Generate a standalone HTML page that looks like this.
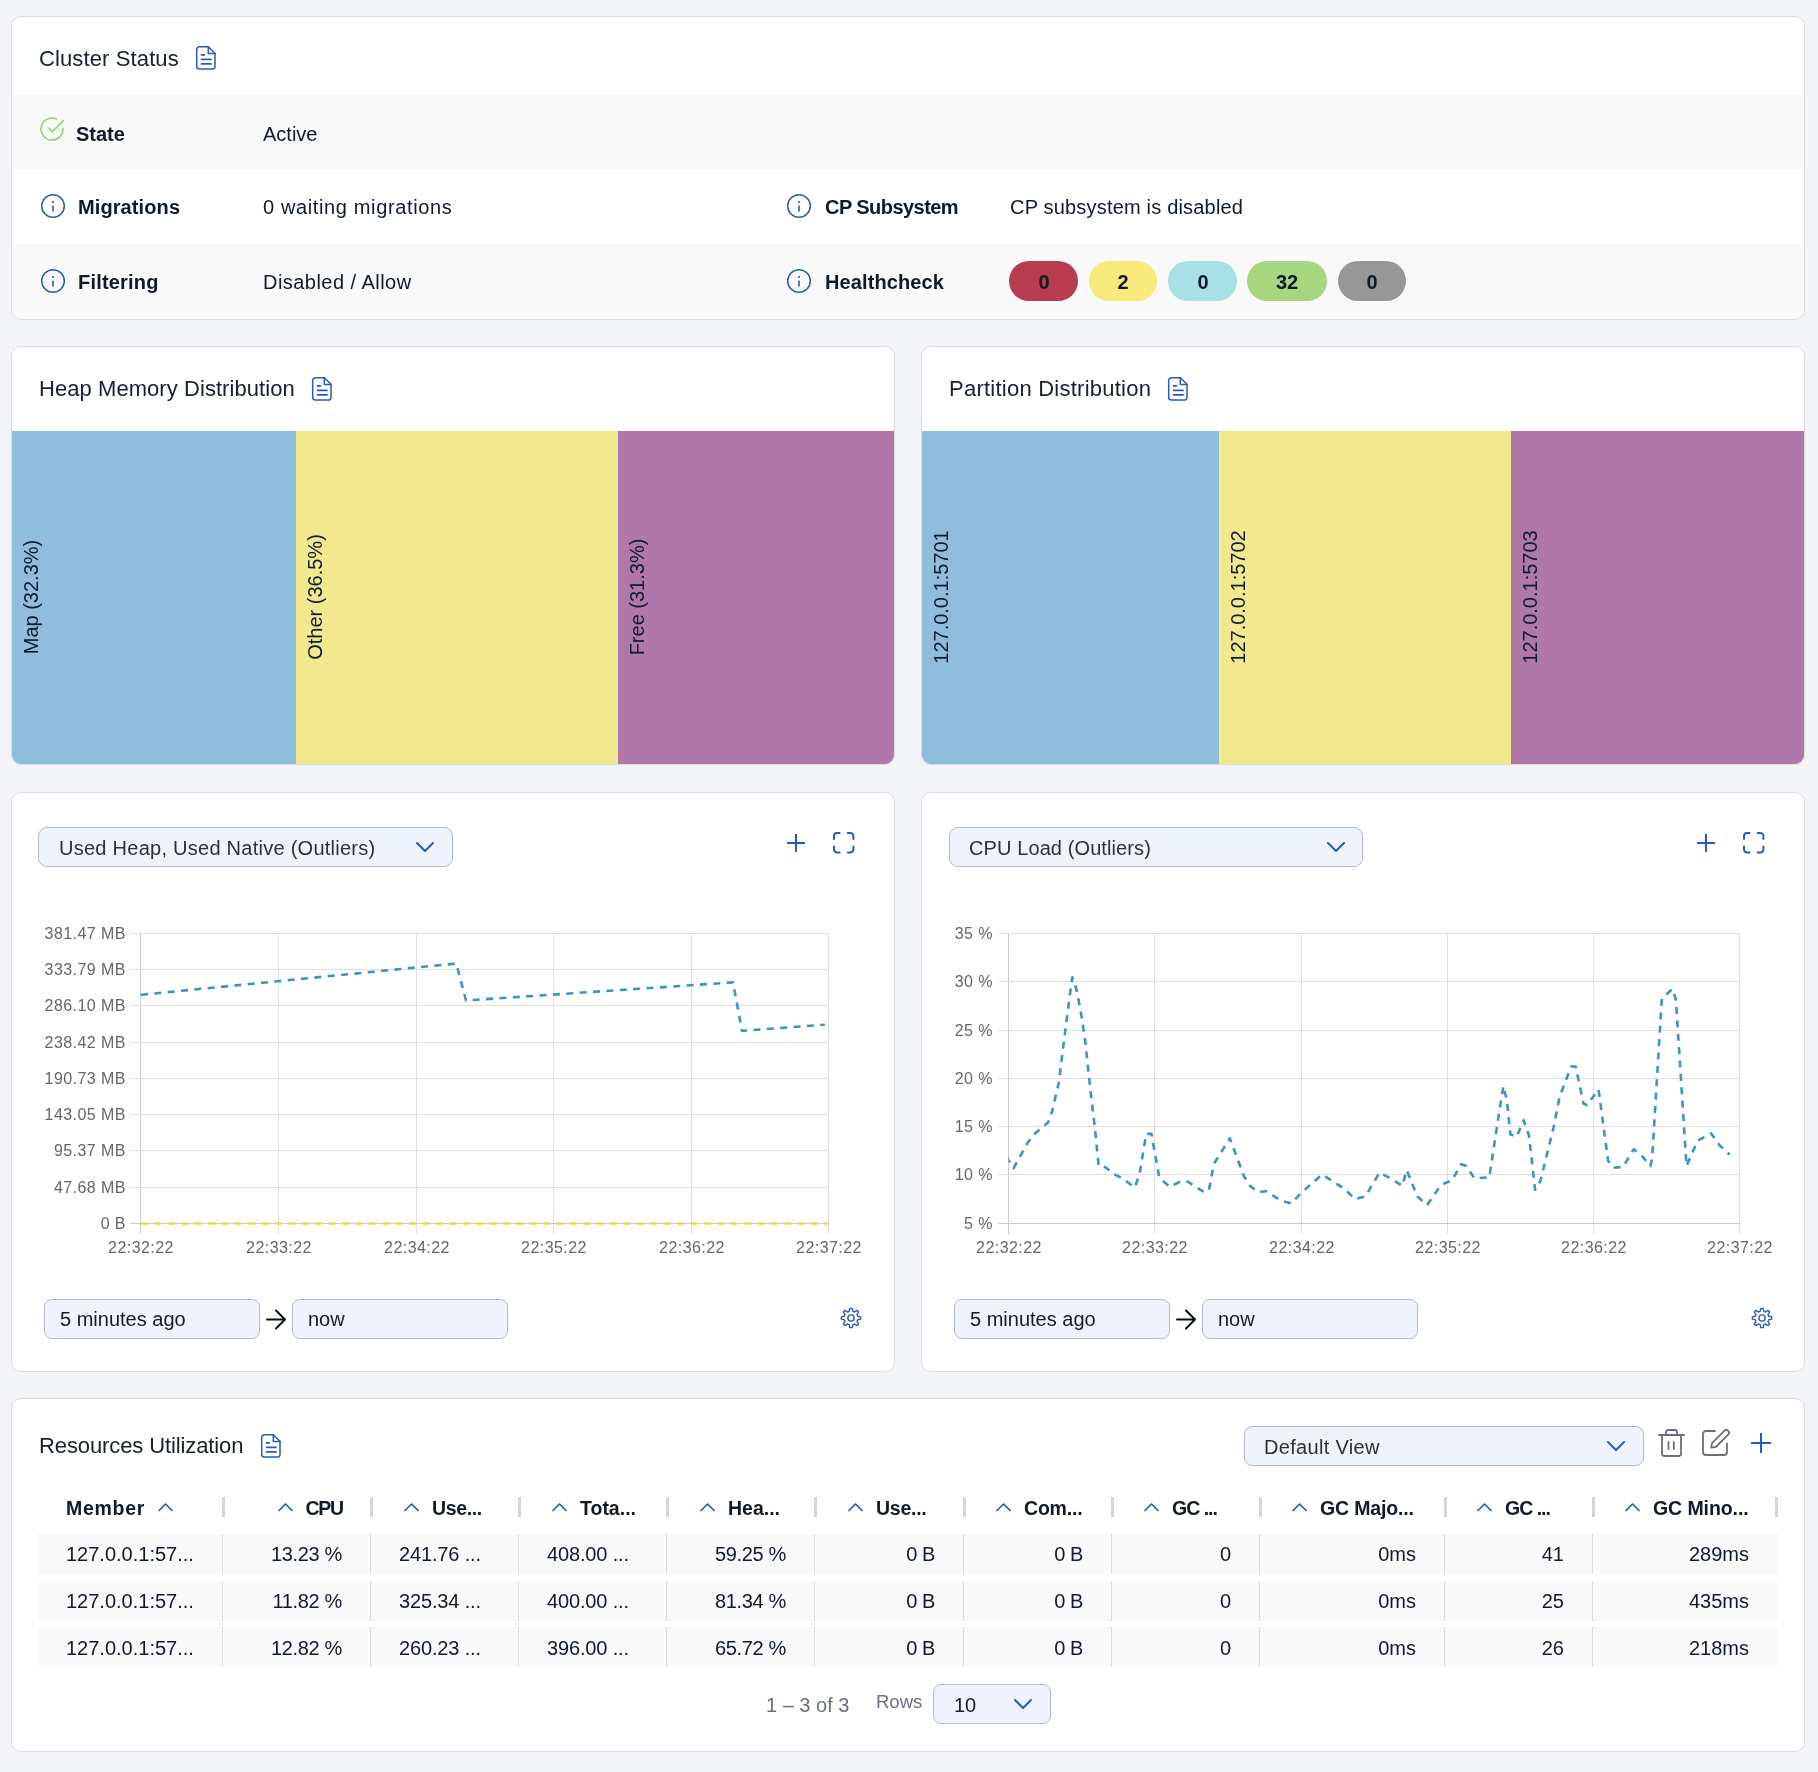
<!DOCTYPE html>
<html><head><meta charset="utf-8"><title>Cluster Dashboard</title>
<style>
html,body{margin:0;padding:0;}
body{width:1818px;height:1772px;background:#f3f4f8;position:relative;overflow:hidden;font-family:"Liberation Sans", sans-serif;}
.t{position:absolute;white-space:nowrap;will-change:transform;}
.b{position:absolute;box-sizing:border-box;}
.s{position:absolute;overflow:visible;}
</style></head><body>
<div class="b" style="left:11px;top:16px;width:1794px;height:304px;background:#fff;border:1px solid #dcdcdc;border-radius:10px;"></div>
<div class="b" style="left:12px;top:95px;width:1792px;height:74px;background:#f9f9fa;"></div>
<div class="b" style="left:12px;top:244px;width:1792px;height:75px;background:#f9f9fa;border-radius:0 0 9px 9px;"></div>
<div class="t" style="top:47.87px;font-size:22px;line-height:22px;color:#152031;letter-spacing:0.12px;left:38.60px;">Cluster Status</div>
<svg class="s" style="left:196.3px;top:46px" width="20" height="24" viewBox="0 0 20 24" fill="none"><g stroke="#2c59bf" stroke-width="1.5" stroke-linejoin="round" stroke-linecap="round"><path d="M12.3 0.8 L19.0 7.3 V20.6 A2.5 2.5 0 0 1 16.5 23.1 H3.5 A2.8 2.8 0 0 1 0.7 20.3 V3.6 A2.8 2.8 0 0 1 3.5 0.8 Z"/><path d="M12.3 0.8 V7.5 H19.0"/><path d="M5.5 8.9 H8.3 M5.5 13.4 H15 M5.5 17.9 H15" stroke-width="1.7"/></g></svg>
<svg class="s" style="left:38.8px;top:116.19999999999999px" width="26" height="26" viewBox="0 0 26 26" fill="none"><g stroke="#8dd46b" stroke-width="1.5" stroke-linecap="round" stroke-linejoin="round"><path d="M17.47 2.95 A11.0 11.0 0 1 0 23.97 12.23"/><path d="M9.9 12.1 L13.4 15.7 L24.3 4.6"/></g></svg>
<div class="t" style="top:123.57px;font-size:20px;line-height:20px;color:#0f1a2a;font-weight:700;left:76.00px;">State</div>
<div class="t" style="top:123.57px;font-size:20px;line-height:20px;color:#0f1a2a;left:262.50px;">Active</div>
<svg class="s" style="left:39.9px;top:193.3px" width="26" height="26" viewBox="0 0 26 26" fill="none"><g stroke="#2c59bf" stroke-linecap="round"><circle cx="13" cy="13" r="11.3" stroke-width="1.5"/><path d="M13 13.2 V18" stroke-width="1.6"/></g><circle cx="13" cy="9" r="1.1" fill="#2c59bf"/></svg>
<div class="t" style="top:197.47px;font-size:20px;line-height:20px;color:#0f1a2a;font-weight:700;letter-spacing:0.1px;left:78.00px;">Migrations</div>
<div class="t" style="top:197.47px;font-size:20px;line-height:20px;color:#0f1a2a;letter-spacing:0.63px;left:262.50px;">0 waiting migrations</div>
<svg class="s" style="left:39.9px;top:268.2px" width="26" height="26" viewBox="0 0 26 26" fill="none"><g stroke="#2c59bf" stroke-linecap="round"><circle cx="13" cy="13" r="11.3" stroke-width="1.5"/><path d="M13 13.2 V18" stroke-width="1.6"/></g><circle cx="13" cy="9" r="1.1" fill="#2c59bf"/></svg>
<div class="t" style="top:272.27px;font-size:20px;line-height:20px;color:#0f1a2a;font-weight:700;letter-spacing:0.2px;left:78.00px;">Filtering</div>
<div class="t" style="top:272.27px;font-size:20px;line-height:20px;color:#0f1a2a;letter-spacing:0.46px;left:262.50px;">Disabled / Allow</div>
<svg class="s" style="left:786.4px;top:193.3px" width="26" height="26" viewBox="0 0 26 26" fill="none"><g stroke="#2c59bf" stroke-linecap="round"><circle cx="13" cy="13" r="11.3" stroke-width="1.5"/><path d="M13 13.2 V18" stroke-width="1.6"/></g><circle cx="13" cy="9" r="1.1" fill="#2c59bf"/></svg>
<div class="t" style="top:197.27px;font-size:20px;line-height:20px;color:#0f1a2a;font-weight:700;letter-spacing:-0.55px;left:825.00px;">CP Subsystem</div>
<div class="t" style="top:197.27px;font-size:20px;line-height:20px;color:#0f1a2a;letter-spacing:0.19px;left:1009.70px;">CP subsystem is disabled</div>
<svg class="s" style="left:786.4px;top:268.2px" width="26" height="26" viewBox="0 0 26 26" fill="none"><g stroke="#2c59bf" stroke-linecap="round"><circle cx="13" cy="13" r="11.3" stroke-width="1.5"/><path d="M13 13.2 V18" stroke-width="1.6"/></g><circle cx="13" cy="9" r="1.1" fill="#2c59bf"/></svg>
<div class="t" style="top:272.27px;font-size:20px;line-height:20px;color:#0f1a2a;font-weight:700;letter-spacing:0.1px;left:824.50px;">Healthcheck</div>
<div class="b" style="left:1009px;top:261px;width:69px;height:40px;background:#b83b50;border-radius:20px;"></div>
<div class="t" style="top:272.27px;font-size:20px;line-height:20px;color:#0f1a2a;font-weight:700;left:743.50px;width:600px;text-align:center;">0</div>
<div class="b" style="left:1089px;top:261px;width:68px;height:40px;background:#f9ea7c;border-radius:20px;"></div>
<div class="t" style="top:272.27px;font-size:20px;line-height:20px;color:#0f1a2a;font-weight:700;left:823.00px;width:600px;text-align:center;">2</div>
<div class="b" style="left:1168px;top:261px;width:69px;height:40px;background:#a7e1e5;border-radius:20px;"></div>
<div class="t" style="top:272.27px;font-size:20px;line-height:20px;color:#0f1a2a;font-weight:700;left:902.50px;width:600px;text-align:center;">0</div>
<div class="b" style="left:1247px;top:261px;width:80px;height:40px;background:#a6d67e;border-radius:20px;"></div>
<div class="t" style="top:272.27px;font-size:20px;line-height:20px;color:#0f1a2a;font-weight:700;left:987.00px;width:600px;text-align:center;">32</div>
<div class="b" style="left:1338px;top:261px;width:68px;height:40px;background:#979797;border-radius:20px;"></div>
<div class="t" style="top:272.27px;font-size:20px;line-height:20px;color:#0f1a2a;font-weight:700;left:1072.00px;width:600px;text-align:center;">0</div>
<div class="b" style="left:11px;top:346px;width:884px;height:419px;background:#fff;border:1px solid #dcdcdc;border-radius:10px;"></div>
<div class="t" style="top:377.87px;font-size:22px;line-height:22px;color:#152031;letter-spacing:0.06px;left:38.60px;">Heap Memory Distribution</div>
<svg class="s" style="left:312.3px;top:377.4px" width="20" height="24" viewBox="0 0 20 24" fill="none"><g stroke="#2c59bf" stroke-width="1.5" stroke-linejoin="round" stroke-linecap="round"><path d="M12.3 0.8 L19.0 7.3 V20.6 A2.5 2.5 0 0 1 16.5 23.1 H3.5 A2.8 2.8 0 0 1 0.7 20.3 V3.6 A2.8 2.8 0 0 1 3.5 0.8 Z"/><path d="M12.3 0.8 V7.5 H19.0"/><path d="M5.5 8.9 H8.3 M5.5 13.4 H15 M5.5 17.9 H15" stroke-width="1.7"/></g></svg>
<div class="b" style="left:12px;top:431px;width:284px;height:333px;background:#8fbedd;border-bottom-left-radius:9px;"></div>
<div class="t" style="left:-261.7px;top:587.0px;width:600px;height:20px;text-align:center;font-size:20px;line-height:20px;color:#0f1a2a;transform:rotate(-90deg);transform-origin:300px 10px;"><span style="position:relative;top:-6.93px">Map (32.3%)</span></div>
<div class="b" style="left:296px;top:431px;width:322px;height:333px;background:#f2e98f;"></div>
<div class="t" style="left:22.3px;top:587.0px;width:600px;height:20px;text-align:center;font-size:20px;line-height:20px;color:#0f1a2a;transform:rotate(-90deg);transform-origin:300px 10px;"><span style="position:relative;top:-6.93px">Other (36.5%)</span></div>
<div class="b" style="left:618px;top:431px;width:276px;height:333px;background:#b078aa;border-bottom-right-radius:9px;"></div>
<div class="t" style="left:344.3px;top:587.0px;width:600px;height:20px;text-align:center;font-size:20px;line-height:20px;color:#0f1a2a;transform:rotate(-90deg);transform-origin:300px 10px;"><span style="position:relative;top:-6.93px">Free (31.3%)</span></div>
<div class="b" style="left:921px;top:346px;width:884px;height:419px;background:#fff;border:1px solid #dcdcdc;border-radius:10px;"></div>
<div class="t" style="top:377.87px;font-size:22px;line-height:22px;color:#152031;letter-spacing:0.24px;left:948.60px;">Partition Distribution</div>
<svg class="s" style="left:1168.3px;top:377.4px" width="20" height="24" viewBox="0 0 20 24" fill="none"><g stroke="#2c59bf" stroke-width="1.5" stroke-linejoin="round" stroke-linecap="round"><path d="M12.3 0.8 L19.0 7.3 V20.6 A2.5 2.5 0 0 1 16.5 23.1 H3.5 A2.8 2.8 0 0 1 0.7 20.3 V3.6 A2.8 2.8 0 0 1 3.5 0.8 Z"/><path d="M12.3 0.8 V7.5 H19.0"/><path d="M5.5 8.9 H8.3 M5.5 13.4 H15 M5.5 17.9 H15" stroke-width="1.7"/></g></svg>
<div class="b" style="left:922px;top:431px;width:297px;height:333px;background:#8fbedd;border-bottom-left-radius:9px;"></div>
<div class="t" style="left:648.3px;top:587.0px;width:600px;height:20px;text-align:center;font-size:20px;line-height:20px;color:#0f1a2a;transform:rotate(-90deg);transform-origin:300px 10px;"><span style="position:relative;top:-6.93px">127.0.0.1:5701</span></div>
<div class="b" style="left:1219px;top:431px;width:292px;height:333px;background:#f2e98f;"></div>
<div class="t" style="left:945.3px;top:587.0px;width:600px;height:20px;text-align:center;font-size:20px;line-height:20px;color:#0f1a2a;transform:rotate(-90deg);transform-origin:300px 10px;"><span style="position:relative;top:-6.93px">127.0.0.1:5702</span></div>
<div class="b" style="left:1511px;top:431px;width:293px;height:333px;background:#b078aa;border-bottom-right-radius:9px;"></div>
<div class="t" style="left:1237.3px;top:587.0px;width:600px;height:20px;text-align:center;font-size:20px;line-height:20px;color:#0f1a2a;transform:rotate(-90deg);transform-origin:300px 10px;"><span style="position:relative;top:-6.93px">127.0.0.1:5703</span></div>
<div class="b" style="left:11px;top:792px;width:884px;height:580px;background:#fff;border:1px solid #dcdcdc;border-radius:10px;"></div>
<div class="b" style="left:38px;top:827px;width:415px;height:40px;background:#eff4fc;border:1px solid #b3bac8;border-radius:9px;"></div>
<div class="t" style="top:837.57px;font-size:20px;line-height:20px;color:#2d3036;letter-spacing:0.26px;left:58.50px;">Used Heap, Used Native (Outliers)</div>
<svg class="s" style="left:415.5px;top:842px" width="18" height="10" viewBox="0 0 18 10" fill="none"><path d="M1 1 L9.0 9 L17 1" stroke="#2c59bf" stroke-width="2" stroke-linecap="round" stroke-linejoin="round"/></svg>
<svg class="s" style="left:787.4px;top:834.3px" width="18" height="18" viewBox="0 0 18 18" fill="none"><path d="M9.0 0 V18 M0 9.0 H18" stroke="#2c59bf" stroke-width="2"/></svg>
<svg class="s" style="left:832.6px;top:832.4px" width="22" height="22" viewBox="0 0 22 22" fill="none"><g stroke="#2c59bf" stroke-width="2" stroke-linecap="round" fill="none"><path d="M1 7 V4 A3 3 0 0 1 4 1 H6.6"/><path d="M14.8 1 H17.4 A3 3 0 0 1 20.4 4 V7"/><path d="M20.4 14.4 V17.4 A3 3 0 0 1 17.4 20.4 H14.8"/><path d="M6.6 20.4 H4 A3 3 0 0 1 1 17.4 V14.4"/></g></svg>
<svg class="s" style="left:11px;top:792px" width="884" height="580" fill="none"><defs><clipPath id="clip11"><rect x="129.5" y="136.60000000000002" width="688" height="298.9999999999999"/></clipPath></defs><path d="M129.50 141.60000000000002 V442" stroke="#cccccc" stroke-width="1"/><path d="M267.50 141.60000000000002 V442" stroke="#e0e0e0" stroke-width="1"/><path d="M405.50 141.60000000000002 V442" stroke="#e0e0e0" stroke-width="1"/><path d="M542.50 141.60000000000002 V442" stroke="#e0e0e0" stroke-width="1"/><path d="M680.50 141.60000000000002 V442" stroke="#e0e0e0" stroke-width="1"/><path d="M817.50 141.60000000000002 V442" stroke="#e0e0e0" stroke-width="1"/><path d="M119 141.50 H818" stroke="#e0e0e0" stroke-width="1"/><path d="M119 177.50 H818" stroke="#e0e0e0" stroke-width="1"/><path d="M119 213.50 H818" stroke="#e0e0e0" stroke-width="1"/><path d="M119 250.50 H818" stroke="#e0e0e0" stroke-width="1"/><path d="M119 286.50 H818" stroke="#e0e0e0" stroke-width="1"/><path d="M119 322.50 H818" stroke="#e0e0e0" stroke-width="1"/><path d="M119 358.50 H818" stroke="#e0e0e0" stroke-width="1"/><path d="M119 395.50 H818" stroke="#e0e0e0" stroke-width="1"/><path d="M119 431.50 H818" stroke="#cccccc" stroke-width="1"/><g clip-path="url(#clip11)"><path d="M130.00 431.50 L817.70 431.50" stroke="#ecdb3e" stroke-width="2.6" stroke-dasharray="7 6.4" stroke-linejoin="round"/><path d="M130.00 202.80 L445.30 171.50 L455.00 208.50 L722.00 190.40 L731.00 238.80 L813.80 232.70" stroke="#3a94c7" stroke-width="2.6" stroke-dasharray="7 6.4" stroke-linejoin="round"/></g></svg>
<div class="t" style="top:926.05px;font-size:16px;line-height:16px;color:#666666;letter-spacing:0.45px;left:-474.05px;width:600px;text-align:right;">381.47 MB</div>
<div class="t" style="top:962.05px;font-size:16px;line-height:16px;color:#666666;letter-spacing:0.45px;left:-474.05px;width:600px;text-align:right;">333.79 MB</div>
<div class="t" style="top:998.05px;font-size:16px;line-height:16px;color:#666666;letter-spacing:0.45px;left:-474.05px;width:600px;text-align:right;">286.10 MB</div>
<div class="t" style="top:1035.05px;font-size:16px;line-height:16px;color:#666666;letter-spacing:0.45px;left:-474.05px;width:600px;text-align:right;">238.42 MB</div>
<div class="t" style="top:1071.05px;font-size:16px;line-height:16px;color:#666666;letter-spacing:0.45px;left:-474.05px;width:600px;text-align:right;">190.73 MB</div>
<div class="t" style="top:1107.05px;font-size:16px;line-height:16px;color:#666666;letter-spacing:0.45px;left:-474.05px;width:600px;text-align:right;">143.05 MB</div>
<div class="t" style="top:1143.05px;font-size:16px;line-height:16px;color:#666666;letter-spacing:0.45px;left:-474.05px;width:600px;text-align:right;">95.37 MB</div>
<div class="t" style="top:1180.05px;font-size:16px;line-height:16px;color:#666666;letter-spacing:0.45px;left:-474.05px;width:600px;text-align:right;">47.68 MB</div>
<div class="t" style="top:1216.05px;font-size:16px;line-height:16px;color:#666666;letter-spacing:0.45px;left:-474.05px;width:600px;text-align:right;">0 B</div>
<div class="t" style="top:1240.35px;font-size:16px;line-height:16px;color:#666666;letter-spacing:0.45px;left:-159.28px;width:600px;text-align:center;">22:32:22</div>
<div class="t" style="top:1240.35px;font-size:16px;line-height:16px;color:#666666;letter-spacing:0.45px;left:-21.28px;width:600px;text-align:center;">22:33:22</div>
<div class="t" style="top:1240.35px;font-size:16px;line-height:16px;color:#666666;letter-spacing:0.45px;left:116.72px;width:600px;text-align:center;">22:34:22</div>
<div class="t" style="top:1240.35px;font-size:16px;line-height:16px;color:#666666;letter-spacing:0.45px;left:253.72px;width:600px;text-align:center;">22:35:22</div>
<div class="t" style="top:1240.35px;font-size:16px;line-height:16px;color:#666666;letter-spacing:0.45px;left:391.72px;width:600px;text-align:center;">22:36:22</div>
<div class="t" style="top:1240.35px;font-size:16px;line-height:16px;color:#666666;letter-spacing:0.45px;left:528.72px;width:600px;text-align:center;">22:37:22</div>
<div class="b" style="left:44px;top:1299px;width:216px;height:40px;background:#eff4fc;border:1px solid #b3bac8;border-radius:8px;"></div>
<div class="t" style="top:1308.57px;font-size:20px;line-height:20px;color:#161b24;left:60.00px;">5 minutes ago</div>
<svg class="s" style="left:266px;top:1309px" width="20" height="21" viewBox="0 0 20 21" fill="none"><g stroke="#060c18" stroke-width="2" stroke-linecap="round" stroke-linejoin="round"><path d="M1 10.5 H19 M10 1.5 L19 10.5 L10 19.5"/></g></svg>
<div class="b" style="left:292px;top:1299px;width:216px;height:40px;background:#eff4fc;border:1px solid #b3bac8;border-radius:8px;"></div>
<div class="t" style="top:1308.57px;font-size:20px;line-height:20px;color:#161b24;left:308.00px;">now</div>
<svg class="s" style="left:838.5px;top:1306.4px" width="24" height="24" viewBox="0 0 24 24" fill="none"><g stroke="#2c59bf" stroke-width="1.4" stroke-linejoin="round"><path d="M10.31 5.21 L10.82 2.37 L13.18 2.37 L13.69 5.21 L15.61 6.00 L17.97 4.36 L19.64 6.03 L18.00 8.39 L18.79 10.31 L21.63 10.82 L21.63 13.18 L18.79 13.69 L18.00 15.61 L19.64 17.97 L17.97 19.64 L15.61 18.00 L13.69 18.79 L13.18 21.63 L10.82 21.63 L10.31 18.79 L8.39 18.00 L6.03 19.64 L4.36 17.97 L6.00 15.61 L5.21 13.69 L2.37 13.18 L2.37 10.82 L5.21 10.31 L6.00 8.39 L4.36 6.03 L6.03 4.36 L8.39 6.00 Z"/><circle cx="12" cy="12" r="3.1"/></g></svg>
<div class="b" style="left:921px;top:792px;width:884px;height:580px;background:#fff;border:1px solid #dcdcdc;border-radius:10px;"></div>
<div class="b" style="left:949px;top:827px;width:414px;height:40px;background:#eff4fc;border:1px solid #b3bac8;border-radius:9px;"></div>
<div class="t" style="top:837.57px;font-size:20px;line-height:20px;color:#2d3036;letter-spacing:0.1px;left:968.50px;">CPU Load (Outliers)</div>
<svg class="s" style="left:1326.7px;top:842px" width="18" height="10" viewBox="0 0 18 10" fill="none"><path d="M1 1 L9.0 9 L17 1" stroke="#2c59bf" stroke-width="2" stroke-linecap="round" stroke-linejoin="round"/></svg>
<svg class="s" style="left:1697.4px;top:834.3px" width="18" height="18" viewBox="0 0 18 18" fill="none"><path d="M9.0 0 V18 M0 9.0 H18" stroke="#2c59bf" stroke-width="2"/></svg>
<svg class="s" style="left:1742.6px;top:832.4px" width="22" height="22" viewBox="0 0 22 22" fill="none"><g stroke="#2c59bf" stroke-width="2" stroke-linecap="round" fill="none"><path d="M1 7 V4 A3 3 0 0 1 4 1 H6.6"/><path d="M14.8 1 H17.4 A3 3 0 0 1 20.4 4 V7"/><path d="M20.4 14.4 V17.4 A3 3 0 0 1 17.4 20.4 H14.8"/><path d="M6.6 20.4 H4 A3 3 0 0 1 1 17.4 V14.4"/></g></svg>
<svg class="s" style="left:921px;top:792px" width="884" height="580" fill="none"><defs><clipPath id="clip921"><rect x="87.5" y="136.5" width="731" height="300.0"/></clipPath></defs><path d="M87.50 141.5 V442" stroke="#cccccc" stroke-width="1"/><path d="M233.50 141.5 V442" stroke="#e0e0e0" stroke-width="1"/><path d="M380.50 141.5 V442" stroke="#e0e0e0" stroke-width="1"/><path d="M526.50 141.5 V442" stroke="#e0e0e0" stroke-width="1"/><path d="M672.50 141.5 V442" stroke="#e0e0e0" stroke-width="1"/><path d="M818.50 141.5 V442" stroke="#e0e0e0" stroke-width="1"/><path d="M77 141.50 H819" stroke="#e0e0e0" stroke-width="1"/><path d="M77 189.50 H819" stroke="#e0e0e0" stroke-width="1"/><path d="M77 238.50 H819" stroke="#e0e0e0" stroke-width="1"/><path d="M77 286.50 H819" stroke="#e0e0e0" stroke-width="1"/><path d="M77 334.50 H819" stroke="#e0e0e0" stroke-width="1"/><path d="M77 382.50 H819" stroke="#e0e0e0" stroke-width="1"/><path d="M77 431.50 H819" stroke="#cccccc" stroke-width="1"/><g clip-path="url(#clip921)"><path d="M85.20 364.50 L92.60 376.20 L106.60 350.80 L114.40 341.10 L127.10 330.40 L131.00 319.70 L137.80 290.50 L143.60 243.70 L149.10 200.90 L151.40 185.30 L155.30 197.00 L159.20 216.50 L164.10 247.60 L169.00 294.40 L173.80 335.30 L177.70 374.20 L184.50 375.20 L192.30 382.00 L201.10 385.90 L213.70 395.60 L218.60 382.00 L225.20 341.90 L230.40 341.90 L238.40 386.00 L248.90 394.80 L259.50 389.50 L266.50 389.50 L281.50 399.20 L287.70 399.20 L292.90 371.90 L308.80 346.30 L322.90 384.20 L329.00 393.90 L337.00 400.00 L345.80 399.20 L359.80 408.80 L370.40 411.50 L377.50 403.60 L388.00 393.90 L401.20 382.40 L409.10 387.70 L423.20 396.50 L433.80 407.10 L444.40 404.40 L458.40 380.70 L467.20 385.10 L481.30 393.90 L485.70 378.00 L496.30 404.40 L506.00 413.20 L520.00 393.00 L531.30 388.00 L540.10 372.20 L545.40 374.00 L553.30 386.30 L568.30 385.40 L578.00 321.20 L582.40 293.90 L585.90 308.80 L589.40 342.30 L595.60 344.90 L602.60 328.20 L607.90 343.20 L614.10 397.80 L619.40 389.00 L632.60 335.30 L638.70 304.40 L650.20 274.50 L654.60 274.50 L662.50 311.50 L666.00 313.20 L677.50 297.40 L687.10 368.70 L692.40 375.70 L702.10 374.90 L712.70 357.30 L719.70 362.50 L729.40 374.00 L731.10 366.90 L740.80 206.70 L751.40 197.00 L754.90 207.60 L765.50 374.00 L772.50 358.10 L776.90 348.50 L790.10 341.40 L798.90 353.70 L808.60 362.50" stroke="#3a94c7" stroke-width="2.6" stroke-dasharray="7 6.4" stroke-linejoin="round"/></g></svg>
<div class="t" style="top:926.05px;font-size:16px;line-height:16px;color:#666666;letter-spacing:0.45px;left:392.95px;width:600px;text-align:right;">35 %</div>
<div class="t" style="top:974.05px;font-size:16px;line-height:16px;color:#666666;letter-spacing:0.45px;left:392.95px;width:600px;text-align:right;">30 %</div>
<div class="t" style="top:1023.05px;font-size:16px;line-height:16px;color:#666666;letter-spacing:0.45px;left:392.95px;width:600px;text-align:right;">25 %</div>
<div class="t" style="top:1071.05px;font-size:16px;line-height:16px;color:#666666;letter-spacing:0.45px;left:392.95px;width:600px;text-align:right;">20 %</div>
<div class="t" style="top:1119.05px;font-size:16px;line-height:16px;color:#666666;letter-spacing:0.45px;left:392.95px;width:600px;text-align:right;">15 %</div>
<div class="t" style="top:1167.05px;font-size:16px;line-height:16px;color:#666666;letter-spacing:0.45px;left:392.95px;width:600px;text-align:right;">10 %</div>
<div class="t" style="top:1216.05px;font-size:16px;line-height:16px;color:#666666;letter-spacing:0.45px;left:392.95px;width:600px;text-align:right;">5 %</div>
<div class="t" style="top:1240.35px;font-size:16px;line-height:16px;color:#666666;letter-spacing:0.45px;left:708.72px;width:600px;text-align:center;">22:32:22</div>
<div class="t" style="top:1240.35px;font-size:16px;line-height:16px;color:#666666;letter-spacing:0.45px;left:854.72px;width:600px;text-align:center;">22:33:22</div>
<div class="t" style="top:1240.35px;font-size:16px;line-height:16px;color:#666666;letter-spacing:0.45px;left:1001.72px;width:600px;text-align:center;">22:34:22</div>
<div class="t" style="top:1240.35px;font-size:16px;line-height:16px;color:#666666;letter-spacing:0.45px;left:1147.72px;width:600px;text-align:center;">22:35:22</div>
<div class="t" style="top:1240.35px;font-size:16px;line-height:16px;color:#666666;letter-spacing:0.45px;left:1293.72px;width:600px;text-align:center;">22:36:22</div>
<div class="t" style="top:1240.35px;font-size:16px;line-height:16px;color:#666666;letter-spacing:0.45px;left:1439.72px;width:600px;text-align:center;">22:37:22</div>
<div class="b" style="left:954px;top:1299px;width:216px;height:40px;background:#eff4fc;border:1px solid #b3bac8;border-radius:8px;"></div>
<div class="t" style="top:1308.57px;font-size:20px;line-height:20px;color:#161b24;left:970.00px;">5 minutes ago</div>
<svg class="s" style="left:1176px;top:1309px" width="20" height="21" viewBox="0 0 20 21" fill="none"><g stroke="#060c18" stroke-width="2" stroke-linecap="round" stroke-linejoin="round"><path d="M1 10.5 H19 M10 1.5 L19 10.5 L10 19.5"/></g></svg>
<div class="b" style="left:1202px;top:1299px;width:216px;height:40px;background:#eff4fc;border:1px solid #b3bac8;border-radius:8px;"></div>
<div class="t" style="top:1308.57px;font-size:20px;line-height:20px;color:#161b24;left:1218.00px;">now</div>
<svg class="s" style="left:1749.6px;top:1306.4px" width="24" height="24" viewBox="0 0 24 24" fill="none"><g stroke="#2c59bf" stroke-width="1.4" stroke-linejoin="round"><path d="M10.31 5.21 L10.82 2.37 L13.18 2.37 L13.69 5.21 L15.61 6.00 L17.97 4.36 L19.64 6.03 L18.00 8.39 L18.79 10.31 L21.63 10.82 L21.63 13.18 L18.79 13.69 L18.00 15.61 L19.64 17.97 L17.97 19.64 L15.61 18.00 L13.69 18.79 L13.18 21.63 L10.82 21.63 L10.31 18.79 L8.39 18.00 L6.03 19.64 L4.36 17.97 L6.00 15.61 L5.21 13.69 L2.37 13.18 L2.37 10.82 L5.21 10.31 L6.00 8.39 L4.36 6.03 L6.03 4.36 L8.39 6.00 Z"/><circle cx="12" cy="12" r="3.1"/></g></svg>
<div class="b" style="left:11px;top:1398px;width:1794px;height:354px;background:#fff;border:1px solid #dcdcdc;border-radius:10px;"></div>
<div class="t" style="top:1434.87px;font-size:22px;line-height:22px;color:#152031;letter-spacing:-0.11px;left:38.60px;">Resources Utilization</div>
<svg class="s" style="left:260.8px;top:1434.4px" width="20" height="24" viewBox="0 0 20 24" fill="none"><g stroke="#2c59bf" stroke-width="1.5" stroke-linejoin="round" stroke-linecap="round"><path d="M12.3 0.8 L19.0 7.3 V20.6 A2.5 2.5 0 0 1 16.5 23.1 H3.5 A2.8 2.8 0 0 1 0.7 20.3 V3.6 A2.8 2.8 0 0 1 3.5 0.8 Z"/><path d="M12.3 0.8 V7.5 H19.0"/><path d="M5.5 8.9 H8.3 M5.5 13.4 H15 M5.5 17.9 H15" stroke-width="1.7"/></g></svg>
<div class="b" style="left:1244px;top:1426px;width:400px;height:40px;background:#eff4fc;border:1px solid #b3bac8;border-radius:8px;"></div>
<div class="t" style="top:1436.57px;font-size:20px;line-height:20px;color:#2d3036;letter-spacing:0.32px;left:1263.50px;">Default View</div>
<svg class="s" style="left:1607.2px;top:1441.2px" width="18" height="10" viewBox="0 0 18 10" fill="none"><path d="M1 1 L9.0 9 L17 1" stroke="#2c59bf" stroke-width="2" stroke-linecap="round" stroke-linejoin="round"/></svg>
<svg class="s" style="left:1657.5px;top:1428px" width="27" height="30" viewBox="0 0 27 30" fill="none"><g stroke="#6b6e7c" stroke-width="1.8" stroke-linecap="round" stroke-linejoin="round"><path d="M1 7 H26"/><path d="M8 7 V4 A2 2 0 0 1 10 2 H17 A2 2 0 0 1 19 4 V7"/><path d="M4 7 V25.5 A2.5 2.5 0 0 0 6.5 28 H20.5 A2.5 2.5 0 0 0 23 25.5 V7"/><path d="M10.5 14 V21 M15.8 14 V21"/></g></svg>
<svg class="s" style="left:1700.5px;top:1427px" width="31" height="30" viewBox="0 0 31 30" fill="none"><g stroke="#6b6e7c" stroke-width="1.8" stroke-linecap="round" stroke-linejoin="round"><path d="M14 4 H5 A3 3 0 0 0 2 7 V25 A3 3 0 0 0 5 28 H23 A3 3 0 0 0 26 25 V16.5"/><path d="M10.2 20.6 L11 16.2 L23.8 3.4 A2 2 0 0 1 26.6 3.4 L27.6 4.4 A2 2 0 0 1 27.6 7.2 L14.8 20 Z"/></g></svg>
<svg class="s" style="left:1751.0px;top:1433.0px" width="20" height="20" viewBox="0 0 20 20" fill="none"><path d="M10.0 0 V20 M0 10.0 H20" stroke="#2c59bf" stroke-width="2"/></svg>
<div class="b" style="left:38px;top:1534px;width:1740px;height:40px;background:#f9f9f9;"></div>
<div class="b" style="left:222.0px;top:1534px;width:1px;height:40px;background:#dcdcdc;"></div>
<div class="b" style="left:370.0px;top:1534px;width:1px;height:40px;background:#dcdcdc;"></div>
<div class="b" style="left:518.0px;top:1534px;width:1px;height:40px;background:#dcdcdc;"></div>
<div class="b" style="left:666.0px;top:1534px;width:1px;height:40px;background:#dcdcdc;"></div>
<div class="b" style="left:814.0px;top:1534px;width:1px;height:40px;background:#dcdcdc;"></div>
<div class="b" style="left:962.5px;top:1534px;width:1px;height:40px;background:#dcdcdc;"></div>
<div class="b" style="left:1110.9px;top:1534px;width:1px;height:40px;background:#dcdcdc;"></div>
<div class="b" style="left:1258.9px;top:1534px;width:1px;height:40px;background:#dcdcdc;"></div>
<div class="b" style="left:1443.8px;top:1534px;width:1px;height:40px;background:#dcdcdc;"></div>
<div class="b" style="left:1592.0px;top:1534px;width:1px;height:40px;background:#dcdcdc;"></div>
<div class="b" style="left:38px;top:1581px;width:1740px;height:40px;background:#f9f9f9;"></div>
<div class="b" style="left:222.0px;top:1581px;width:1px;height:40px;background:#dcdcdc;"></div>
<div class="b" style="left:370.0px;top:1581px;width:1px;height:40px;background:#dcdcdc;"></div>
<div class="b" style="left:518.0px;top:1581px;width:1px;height:40px;background:#dcdcdc;"></div>
<div class="b" style="left:666.0px;top:1581px;width:1px;height:40px;background:#dcdcdc;"></div>
<div class="b" style="left:814.0px;top:1581px;width:1px;height:40px;background:#dcdcdc;"></div>
<div class="b" style="left:962.5px;top:1581px;width:1px;height:40px;background:#dcdcdc;"></div>
<div class="b" style="left:1110.9px;top:1581px;width:1px;height:40px;background:#dcdcdc;"></div>
<div class="b" style="left:1258.9px;top:1581px;width:1px;height:40px;background:#dcdcdc;"></div>
<div class="b" style="left:1443.8px;top:1581px;width:1px;height:40px;background:#dcdcdc;"></div>
<div class="b" style="left:1592.0px;top:1581px;width:1px;height:40px;background:#dcdcdc;"></div>
<div class="b" style="left:38px;top:1627px;width:1740px;height:40px;background:#f9f9f9;"></div>
<div class="b" style="left:222.0px;top:1627px;width:1px;height:40px;background:#dcdcdc;"></div>
<div class="b" style="left:370.0px;top:1627px;width:1px;height:40px;background:#dcdcdc;"></div>
<div class="b" style="left:518.0px;top:1627px;width:1px;height:40px;background:#dcdcdc;"></div>
<div class="b" style="left:666.0px;top:1627px;width:1px;height:40px;background:#dcdcdc;"></div>
<div class="b" style="left:814.0px;top:1627px;width:1px;height:40px;background:#dcdcdc;"></div>
<div class="b" style="left:962.5px;top:1627px;width:1px;height:40px;background:#dcdcdc;"></div>
<div class="b" style="left:1110.9px;top:1627px;width:1px;height:40px;background:#dcdcdc;"></div>
<div class="b" style="left:1258.9px;top:1627px;width:1px;height:40px;background:#dcdcdc;"></div>
<div class="b" style="left:1443.8px;top:1627px;width:1px;height:40px;background:#dcdcdc;"></div>
<div class="b" style="left:1592.0px;top:1627px;width:1px;height:40px;background:#dcdcdc;"></div>
<div class="b" style="left:222.0px;top:1497px;width:3px;height:20px;background:#d6d6d6;"></div>
<div class="b" style="left:370.0px;top:1497px;width:3px;height:20px;background:#d6d6d6;"></div>
<div class="b" style="left:518.0px;top:1497px;width:3px;height:20px;background:#d6d6d6;"></div>
<div class="b" style="left:666.0px;top:1497px;width:3px;height:20px;background:#d6d6d6;"></div>
<div class="b" style="left:814.0px;top:1497px;width:3px;height:20px;background:#d6d6d6;"></div>
<div class="b" style="left:962.5px;top:1497px;width:3px;height:20px;background:#d6d6d6;"></div>
<div class="b" style="left:1110.9px;top:1497px;width:3px;height:20px;background:#d6d6d6;"></div>
<div class="b" style="left:1258.9px;top:1497px;width:3px;height:20px;background:#d6d6d6;"></div>
<div class="b" style="left:1443.8px;top:1497px;width:3px;height:20px;background:#d6d6d6;"></div>
<div class="b" style="left:1592.0px;top:1497px;width:3px;height:20px;background:#d6d6d6;"></div>
<div class="b" style="left:1774.8px;top:1497px;width:3px;height:20px;background:#d6d6d6;"></div>
<div class="t" style="top:1498.69px;font-size:19.5px;line-height:19.5px;color:#0f1a2a;font-weight:700;letter-spacing:0.7px;left:66.00px;">Member</div>
<svg class="s" style="left:158px;top:1503px" width="15" height="9" viewBox="0 0 15 9" fill="none"><path d="M1 7.5 L7.5 1 L14 7.5" stroke="#2c59bf" stroke-width="1.7" stroke-linecap="round" stroke-linejoin="round"/></svg>
<div class="t" style="top:1498.69px;font-size:19.5px;line-height:19.5px;color:#0f1a2a;font-weight:700;letter-spacing:-1.2px;left:-256.80px;width:600px;text-align:right;">CPU</div>
<svg class="s" style="left:277.9px;top:1503px" width="15" height="9" viewBox="0 0 15 9" fill="none"><path d="M1 7.5 L7.5 1 L14 7.5" stroke="#2c59bf" stroke-width="1.7" stroke-linecap="round" stroke-linejoin="round"/></svg>
<div class="t" style="top:1498.69px;font-size:19.5px;line-height:19.5px;color:#0f1a2a;font-weight:700;letter-spacing:-0.35px;left:432.00px;">Use...</div>
<svg class="s" style="left:404px;top:1503px" width="15" height="9" viewBox="0 0 15 9" fill="none"><path d="M1 7.5 L7.5 1 L14 7.5" stroke="#2c59bf" stroke-width="1.7" stroke-linecap="round" stroke-linejoin="round"/></svg>
<div class="t" style="top:1498.69px;font-size:19.5px;line-height:19.5px;color:#0f1a2a;font-weight:700;left:579.80px;">Tota...</div>
<svg class="s" style="left:551.8px;top:1503px" width="15" height="9" viewBox="0 0 15 9" fill="none"><path d="M1 7.5 L7.5 1 L14 7.5" stroke="#2c59bf" stroke-width="1.7" stroke-linecap="round" stroke-linejoin="round"/></svg>
<div class="t" style="top:1498.69px;font-size:19.5px;line-height:19.5px;color:#0f1a2a;font-weight:700;left:728.30px;">Hea...</div>
<svg class="s" style="left:700.3px;top:1503px" width="15" height="9" viewBox="0 0 15 9" fill="none"><path d="M1 7.5 L7.5 1 L14 7.5" stroke="#2c59bf" stroke-width="1.7" stroke-linecap="round" stroke-linejoin="round"/></svg>
<div class="t" style="top:1498.69px;font-size:19.5px;line-height:19.5px;color:#0f1a2a;font-weight:700;letter-spacing:-0.25px;left:876.00px;">Use...</div>
<svg class="s" style="left:848px;top:1503px" width="15" height="9" viewBox="0 0 15 9" fill="none"><path d="M1 7.5 L7.5 1 L14 7.5" stroke="#2c59bf" stroke-width="1.7" stroke-linecap="round" stroke-linejoin="round"/></svg>
<div class="t" style="top:1498.69px;font-size:19.5px;line-height:19.5px;color:#0f1a2a;font-weight:700;letter-spacing:-0.2px;left:1023.70px;">Com...</div>
<svg class="s" style="left:995.7px;top:1503px" width="15" height="9" viewBox="0 0 15 9" fill="none"><path d="M1 7.5 L7.5 1 L14 7.5" stroke="#2c59bf" stroke-width="1.7" stroke-linecap="round" stroke-linejoin="round"/></svg>
<div class="t" style="top:1498.69px;font-size:19.5px;line-height:19.5px;color:#0f1a2a;font-weight:700;letter-spacing:-1.0px;left:1172.20px;">GC ...</div>
<svg class="s" style="left:1144.2px;top:1503px" width="15" height="9" viewBox="0 0 15 9" fill="none"><path d="M1 7.5 L7.5 1 L14 7.5" stroke="#2c59bf" stroke-width="1.7" stroke-linecap="round" stroke-linejoin="round"/></svg>
<div class="t" style="top:1498.69px;font-size:19.5px;line-height:19.5px;color:#0f1a2a;font-weight:700;letter-spacing:-0.17px;left:1319.90px;">GC Majo...</div>
<svg class="s" style="left:1291.9px;top:1503px" width="15" height="9" viewBox="0 0 15 9" fill="none"><path d="M1 7.5 L7.5 1 L14 7.5" stroke="#2c59bf" stroke-width="1.7" stroke-linecap="round" stroke-linejoin="round"/></svg>
<div class="t" style="top:1498.69px;font-size:19.5px;line-height:19.5px;color:#0f1a2a;font-weight:700;letter-spacing:-1.0px;left:1505.10px;">GC ...</div>
<svg class="s" style="left:1477.1px;top:1503px" width="15" height="9" viewBox="0 0 15 9" fill="none"><path d="M1 7.5 L7.5 1 L14 7.5" stroke="#2c59bf" stroke-width="1.7" stroke-linecap="round" stroke-linejoin="round"/></svg>
<div class="t" style="top:1498.69px;font-size:19.5px;line-height:19.5px;color:#0f1a2a;font-weight:700;letter-spacing:-0.08px;left:1653.40px;">GC Mino...</div>
<svg class="s" style="left:1625.4px;top:1503px" width="15" height="9" viewBox="0 0 15 9" fill="none"><path d="M1 7.5 L7.5 1 L14 7.5" stroke="#2c59bf" stroke-width="1.7" stroke-linecap="round" stroke-linejoin="round"/></svg>
<div class="t" style="top:1543.87px;font-size:20px;line-height:20px;color:#0f1a2a;left:65.50px;">127.0.0.1:57...</div>
<div class="t" style="top:1543.87px;font-size:20px;line-height:20px;color:#0f1a2a;letter-spacing:-0.35px;left:-257.65px;width:600px;text-align:right;">13.23 %</div>
<div class="t" style="top:1543.87px;font-size:20px;line-height:20px;color:#0f1a2a;letter-spacing:-0.15px;left:398.50px;">241.76 ...</div>
<div class="t" style="top:1543.87px;font-size:20px;line-height:20px;color:#0f1a2a;letter-spacing:-0.15px;left:546.50px;">408.00 ...</div>
<div class="t" style="top:1543.87px;font-size:20px;line-height:20px;color:#0f1a2a;letter-spacing:-0.35px;left:186.35px;width:600px;text-align:right;">59.25 %</div>
<div class="t" style="top:1543.87px;font-size:20px;line-height:20px;color:#0f1a2a;letter-spacing:-0.4px;left:334.90px;width:600px;text-align:right;">0 B</div>
<div class="t" style="top:1543.87px;font-size:20px;line-height:20px;color:#0f1a2a;letter-spacing:-0.4px;left:483.30px;width:600px;text-align:right;">0 B</div>
<div class="t" style="top:1543.87px;font-size:20px;line-height:20px;color:#0f1a2a;left:630.90px;width:600px;text-align:right;">0</div>
<div class="t" style="top:1543.87px;font-size:20px;line-height:20px;color:#0f1a2a;left:815.80px;width:600px;text-align:right;">0ms</div>
<div class="t" style="top:1543.87px;font-size:20px;line-height:20px;color:#0f1a2a;left:964.00px;width:600px;text-align:right;">41</div>
<div class="t" style="top:1543.87px;font-size:20px;line-height:20px;color:#0f1a2a;left:1149.30px;width:600px;text-align:right;">289ms</div>
<div class="t" style="top:1590.67px;font-size:20px;line-height:20px;color:#0f1a2a;left:65.50px;">127.0.0.1:57...</div>
<div class="t" style="top:1590.67px;font-size:20px;line-height:20px;color:#0f1a2a;letter-spacing:-0.35px;left:-257.65px;width:600px;text-align:right;">11.82 %</div>
<div class="t" style="top:1590.67px;font-size:20px;line-height:20px;color:#0f1a2a;letter-spacing:-0.15px;left:398.50px;">325.34 ...</div>
<div class="t" style="top:1590.67px;font-size:20px;line-height:20px;color:#0f1a2a;letter-spacing:-0.15px;left:546.50px;">400.00 ...</div>
<div class="t" style="top:1590.67px;font-size:20px;line-height:20px;color:#0f1a2a;letter-spacing:-0.35px;left:186.35px;width:600px;text-align:right;">81.34 %</div>
<div class="t" style="top:1590.67px;font-size:20px;line-height:20px;color:#0f1a2a;letter-spacing:-0.4px;left:334.90px;width:600px;text-align:right;">0 B</div>
<div class="t" style="top:1590.67px;font-size:20px;line-height:20px;color:#0f1a2a;letter-spacing:-0.4px;left:483.30px;width:600px;text-align:right;">0 B</div>
<div class="t" style="top:1590.67px;font-size:20px;line-height:20px;color:#0f1a2a;left:630.90px;width:600px;text-align:right;">0</div>
<div class="t" style="top:1590.67px;font-size:20px;line-height:20px;color:#0f1a2a;left:815.80px;width:600px;text-align:right;">0ms</div>
<div class="t" style="top:1590.67px;font-size:20px;line-height:20px;color:#0f1a2a;left:964.00px;width:600px;text-align:right;">25</div>
<div class="t" style="top:1590.67px;font-size:20px;line-height:20px;color:#0f1a2a;left:1149.30px;width:600px;text-align:right;">435ms</div>
<div class="t" style="top:1637.67px;font-size:20px;line-height:20px;color:#0f1a2a;left:65.50px;">127.0.0.1:57...</div>
<div class="t" style="top:1637.67px;font-size:20px;line-height:20px;color:#0f1a2a;letter-spacing:-0.35px;left:-257.65px;width:600px;text-align:right;">12.82 %</div>
<div class="t" style="top:1637.67px;font-size:20px;line-height:20px;color:#0f1a2a;letter-spacing:-0.15px;left:398.50px;">260.23 ...</div>
<div class="t" style="top:1637.67px;font-size:20px;line-height:20px;color:#0f1a2a;letter-spacing:-0.15px;left:546.50px;">396.00 ...</div>
<div class="t" style="top:1637.67px;font-size:20px;line-height:20px;color:#0f1a2a;letter-spacing:-0.35px;left:186.35px;width:600px;text-align:right;">65.72 %</div>
<div class="t" style="top:1637.67px;font-size:20px;line-height:20px;color:#0f1a2a;letter-spacing:-0.4px;left:334.90px;width:600px;text-align:right;">0 B</div>
<div class="t" style="top:1637.67px;font-size:20px;line-height:20px;color:#0f1a2a;letter-spacing:-0.4px;left:483.30px;width:600px;text-align:right;">0 B</div>
<div class="t" style="top:1637.67px;font-size:20px;line-height:20px;color:#0f1a2a;left:630.90px;width:600px;text-align:right;">0</div>
<div class="t" style="top:1637.67px;font-size:20px;line-height:20px;color:#0f1a2a;left:815.80px;width:600px;text-align:right;">0ms</div>
<div class="t" style="top:1637.67px;font-size:20px;line-height:20px;color:#0f1a2a;left:964.00px;width:600px;text-align:right;">26</div>
<div class="t" style="top:1637.67px;font-size:20px;line-height:20px;color:#0f1a2a;left:1149.30px;width:600px;text-align:right;">218ms</div>
<div class="t" style="top:1695.07px;font-size:20px;line-height:20px;color:#6b7080;left:766.00px;">1 – 3 of 3</div>
<div class="t" style="top:1693.34px;font-size:18.5px;line-height:18.5px;color:#6b7080;left:875.50px;">Rows</div>
<div class="b" style="left:933px;top:1684px;width:118px;height:40px;background:#eff4fc;border:1px solid #b3bac8;border-radius:8px;"></div>
<div class="t" style="top:1695.07px;font-size:20px;line-height:20px;color:#161b24;left:954.00px;">10</div>
<svg class="s" style="left:1013.8px;top:1699px" width="18" height="10" viewBox="0 0 18 10" fill="none"><path d="M1 1 L9.0 9 L17 1" stroke="#2c59bf" stroke-width="2" stroke-linecap="round" stroke-linejoin="round"/></svg>
</body></html>
